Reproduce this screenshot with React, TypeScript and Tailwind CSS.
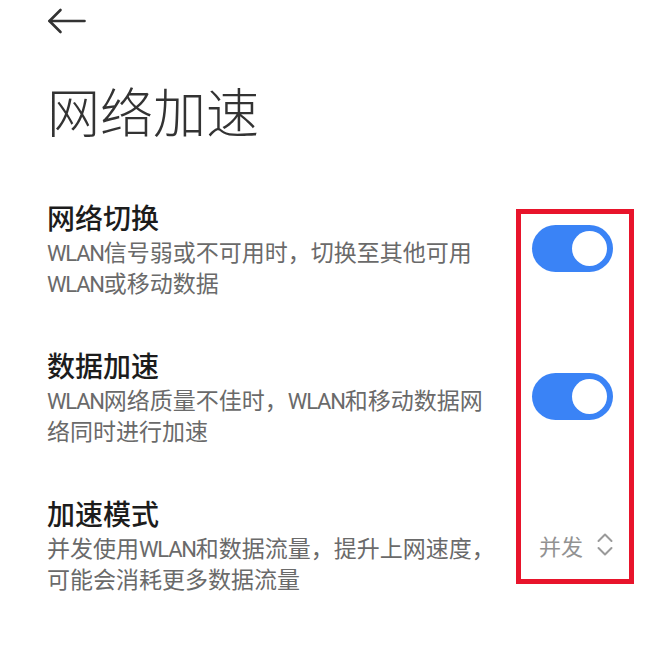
const font = "font-['Noto_Sans_CJK_SC','Noto_Sans',sans-serif]";

function Wlan() {
  return (
    <span className="inline-block align-baseline font-['Roboto','Noto_Sans_CJK_SC',sans-serif] text-[22px] leading-none tracking-[-1.2px]">
      WLAN
    </span>
  );
}

function Toggle() {
  return (
    <div className="flex h-[47px] w-[81px] items-center justify-end rounded-full bg-[#3a83f6] pr-[6px]">
      <div className="h-[35px] w-[35px] rounded-full bg-white" />
    </div>
  );
}

function Chevrons() {
  return (
    <svg width="16" height="25" viewBox="0 0 16 25" fill="none" stroke="#9a9a9a" strokeWidth="2" strokeLinecap="round" strokeLinejoin="round">
      <polyline points="1.5,9 8,2.5 14.5,9" />
      <polyline points="1.5,16 8,22.5 14.5,16" />
    </svg>
  );
}

type Row = {
  title: string;
  lines: React.ReactNode[];
  control: React.ReactNode;
};

const rows: Row[] = [
  {
    title: "网络切换",
    lines: [
      <>
        <Wlan />信号弱或不可用时，切换至其他可用
      </>,
      <>
        <Wlan />或移动数据
      </>,
    ],
    control: <Toggle />,
  },
  {
    title: "数据加速",
    lines: [
      <>
        <Wlan />网络质量不佳时，<Wlan />和移动数据网
      </>,
      <>络同时进行加速</>,
    ],
    control: <Toggle />,
  },
  {
    title: "加速模式",
    lines: [
      <>
        并发使用<Wlan />和数据流量，提升上网速度，
      </>,
      <>可能会消耗更多数据流量</>,
    ],
    control: (
      <div className="flex items-center gap-[14px]">
        <span className="text-[22px] leading-none text-[#929292]">并发</span>
        <Chevrons />
      </div>
    ),
  },
];

export default function App() {
  return (
    <div className={`${font} relative h-[660px] w-[660px] overflow-hidden bg-white pl-[47px] pr-[47px]`}>
      <div className="flex h-[42px] items-center">
        <svg width="40" height="26" viewBox="0 0 40 26" fill="none" stroke="#333" strokeWidth="2.6" strokeLinecap="round" strokeLinejoin="round">
          <line x1="2.5" y1="13" x2="37.5" y2="13" />
          <polyline points="13.5,2 2.5,13 13.5,24" />
        </svg>
      </div>

      <h1 className="mt-[42px] text-[53px] font-light leading-[53px] text-[#333]">网络加速</h1>

      <div className="mt-[62px] flex flex-col gap-[49px]">
        {rows.map(row => (
          <div key={row.title} className="flex items-center justify-between">
            <div className="flex flex-col">
              <div className="h-[36px] text-[28px] font-medium leading-[36px] text-[#1c1c1c]">{row.title}</div>
              <div className="mt-[1px] whitespace-nowrap text-[23px] leading-[31px] text-[#6a6a6a]">
                {row.lines.map((line, i) => (
                  <div key={i} className="h-[31px]">
                    {line}
                  </div>
                ))}
              </div>
            </div>
            {row.control}
          </div>
        ))}
      </div>

      <div className="absolute left-[516px] top-[209px] h-[375px] w-[118px] border-[5px] border-[#e8142b]" />
    </div>
  );
}
